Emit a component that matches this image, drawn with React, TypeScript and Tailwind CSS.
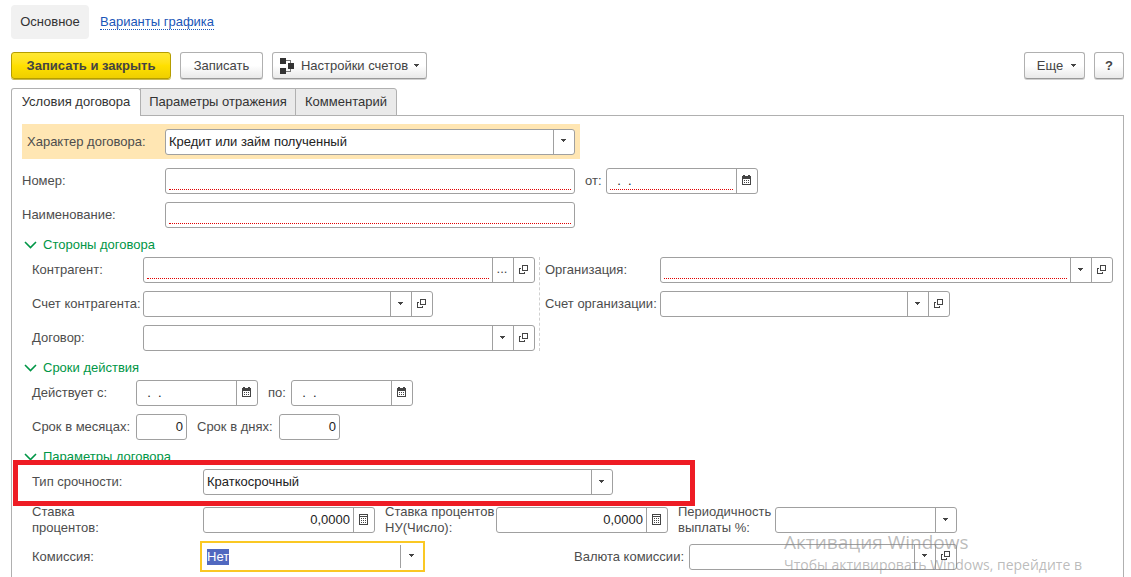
import { useEffect, useRef } from "react";
import type { ReactNode } from "react";
import clsx from "clsx";

const Caret = () => (
  <svg width="5" height="3" viewBox="0 0 5 3" fill="currentColor" shapeRendering="crispEdges">
    <path d="M0 0h5v1H4v1H3v1H2V2H1V1H0z" />
  </svg>
);

const OpenIcon = () => (
  <svg width="9" height="9" viewBox="0 0 9 9" fill="none" stroke="currentColor" shapeRendering="crispEdges">
    <path d="M3.5 0.5h5v5h-5z M2 3.5H0.5v5h5V7" />
  </svg>
);

const CalendarIcon = () => (
  <svg width="9" height="10" viewBox="0 0 9 10" fill="currentColor" shapeRendering="crispEdges">
    <path d="M0 1h1V0h2v1h3V0h2v1h1v9H0z M1 4v5h7V4z" fillRule="evenodd" />
    <path d="M2 5h1v1H2z M4 5h1v1H4z M6 5h1v1H6z M2 7h1v1H2z M4 7h1v1H4z M6 7h1v1H6z" />
  </svg>
);

const CalculatorIcon = () => (
  <svg width="9" height="11" viewBox="0 0 9 11" fill="currentColor" shapeRendering="crispEdges">
    <path d="M0 0h9v11H0z M1 1v1h7V1z M1 3v7h7V3z" fillRule="evenodd" />
    <path d="M2 4h1v1H2z M4 4h1v1H4z M6 4h1v1H6z M2 6h1v1H2z M4 6h1v1H4z M6 6h1v1H6z M2 8h1v1H2z M4 8h1v1H4z M6 8h1v1H6z" />
  </svg>
);

const SchemeIcon = () => (
  <svg width="15" height="16" viewBox="0 0 15 16" fill="#333" shapeRendering="crispEdges">
    <path d="M0 0h6v6H0z M0 10h6v6H0z M8 5h6v6H8z" />
    <path d="M6 2.5h4.5V5 M6 13.5h4.5V11" fill="none" stroke="#777" />
  </svg>
);

// Frame shared by every text box and drop-down
const Box = ({ className, children }: { className: string; children: ReactNode }) => (
  <div className={clsx("flex h-[26px] rounded-[3px] border border-[#a0a0a0] bg-white", className)}>{children}</div>
);

const BoxButton = ({ label, children }: { label: string; children: ReactNode }) => (
  <button
    type="button"
    aria-label={label}
    className="flex w-[21px] shrink-0 items-center justify-center border-l border-[#a0a0a0] pr-[2px] pb-[2px] text-[#444]"
  >
    {children}
  </button>
);

const OpenButton = () => (
  <BoxButton label="Открыть">
    <OpenIcon />
  </BoxButton>
);

type TextProps = { id: string; value?: string; required?: boolean; right?: boolean };

const Text = ({ id, value = "", required, right }: TextProps) => (
  <input
    id={id}
    type="text"
    defaultValue={value}
    className={clsx(
      "mx-[3px] mb-[3px] min-w-0 flex-1 border-b pt-[3px] text-[#222] outline-none",
      required ? "border-dotted border-[#e00000]" : "border-transparent",
      right && "text-right"
    )}
  />
);

const Select = ({ id, value = "" }: { id: string; value?: string }) => (
  <div className="relative min-w-0 flex-1">
    <select id={id} defaultValue={value} className="h-full w-full appearance-none pr-6 pl-[3px] text-[#222] outline-none">
      <option>{value}</option>
    </select>
    <span className="pointer-events-none absolute inset-y-0 right-0 flex w-[21px] items-center justify-center border-l border-[#a0a0a0] pr-[2px] pb-[2px] text-[#444]">
      <Caret />
    </span>
  </div>
);

const DateBox = ({ id, className, required }: { id: string; className: string; required?: boolean }) => (
  <Box className={className}>
    <Text id={id} value="  .  ." required={required} />
    <BoxButton label="Выбрать дату">
      <CalendarIcon />
    </BoxButton>
  </Box>
);

const NumberBox = ({ id }: { id: string }) => (
  <Box className="w-[172px]">
    <Text id={id} value="0,0000" right />
    <BoxButton label="Калькулятор">
      <CalculatorIcon />
    </BoxButton>
  </Box>
);

const Label = ({ id, className, children }: { id: string; className?: string; children: ReactNode }) => (
  <label htmlFor={id} className={clsx("shrink-0 leading-4 whitespace-nowrap", className)}>
    {children}
  </label>
);

const Section = ({ title, children }: { title: string; children: ReactNode }) => (
  <section>
    <h2 className="flex h-[29px] items-center gap-[6px] pt-1 pl-[2px] text-[#009646]">
      <svg width="13" height="8" viewBox="0 0 13 8" fill="none" stroke="currentColor" strokeWidth="1.6">
        <path d="M1 1l5.5 5.5L12 1" />
      </svg>
      {title}
    </h2>
    <div className="pl-[10px]">{children}</div>
  </section>
);

const toolButton =
  "flex h-[27px] items-center justify-center rounded-[3px] border border-[#b0b0b0] border-b-[#989898] bg-linear-to-b from-white from-50% to-[#e9e9e9] text-[#444] shadow-[0_1px_0_#d0d0d0]";

const Toolbar = () => (
  <div className="mt-[13px] flex justify-between">
    <div className="flex gap-[9px]">
      <button
        type="button"
        className="flex h-[27px] w-[160px] items-center justify-center rounded-[3px] border border-[#b59d00] bg-linear-to-b from-[#ffe833] via-[#ffe000] to-[#efcf00] font-bold text-[#444] shadow-[0_1px_0_#c8b850]"
      >
        Записать и закрыть
      </button>
      <button type="button" className={clsx(toolButton, "w-[83px]")}>
        Записать
      </button>
      <button type="button" className={clsx(toolButton, "w-[155px] gap-[6px]")}>
        <SchemeIcon />
        Настройки счетов
        <Caret />
      </button>
    </div>
    <div className="flex gap-[9px]">
      <button type="button" className={clsx(toolButton, "w-[61px] gap-2 pl-1")}>
        Еще
        <Caret />
      </button>
      <button type="button" className={clsx(toolButton, "w-[30px] font-bold")}>
        ?
      </button>
    </div>
  </div>
);

const Tabs = () => (
  <div role="tablist" className="relative z-10 -mb-px flex pt-[9px] text-[#333]">
    <button role="tab" aria-selected="true" className="h-[28px] w-[130px] rounded-t-[3px] border border-b-0 border-[#b0b0b0] bg-white pb-px">
      Условия договора
    </button>
    <button role="tab" className="-ml-px h-[28px] w-[156px] border border-[#b0b0b0] bg-[#eaeaea]">
      Параметры отражения
    </button>
    <button role="tab" className="-ml-px h-[28px] w-[102px] rounded-tr-[3px] border border-[#b0b0b0] bg-[#eaeaea]">
      Комментарий
    </button>
  </div>
);

const App = () => {
  const commission = useRef<HTMLInputElement>(null);

  // The commission box opens focused, with its value selected
  useEffect(() => {
    commission.current?.focus();
    commission.current?.select();
  }, []);

  return (
    <div className="relative flex min-h-screen flex-col overflow-hidden bg-white pt-[5px] pr-[7px] pl-[11px] font-['Liberation_Sans',Arial,sans-serif] text-[13px] text-[#4d4d4d]">
      <nav className="flex items-center gap-[11px]">
        <a href="#main" className="flex h-[34px] w-[78px] items-center justify-center rounded-[4px] bg-[#f1f1f1] text-[#333]">
          Основное
        </a>
        <a href="#schedule" className="border-b border-dotted border-[#1a56b8] leading-[14px] text-[#1a56b8]">
          Варианты графика
        </a>
      </nav>
      <Toolbar />
      <Tabs />

      <main className="flex-1 border border-b-0 border-[#b0b0b0] px-[10px] pt-2">
        <div className="flex h-[35px] w-[558px] items-center bg-[#ffe6b3] pl-[5px]">
          <Label id="kind" className="w-[138px]">Характер договора:</Label>
          <Box className="w-[410px]">
            <Select id="kind" value="Кредит или займ полученный" />
          </Box>
        </div>
        <div className="mt-[9px] flex items-center">
          <Label id="number" className="w-[143px]">Номер:</Label>
          <Box className="w-[410px]">
            <Text id="number" required />
          </Box>
          <Label id="date" className="ml-[10px] w-[21px]">от:</Label>
          <DateBox id="date" className="w-[152px]" required />
        </div>
        <div className="mt-2 flex items-center">
          <Label id="name" className="w-[143px]">Наименование:</Label>
          <Box className="w-[410px]">
            <Text id="name" required />
          </Box>
        </div>

        <Section title="Стороны договора">
          <div className="flex">
            <div className="flex w-[508px] shrink-0 flex-col gap-2 border-r border-dashed border-[#d0d0d0]">
              <div className="flex items-center">
                <Label id="partner" className="w-[111px]">Контрагент:</Label>
                <Box className="w-[392px]">
                  <Text id="partner" required />
                  <BoxButton label="Выбрать">...</BoxButton>
                  <OpenButton />
                </Box>
              </div>
              <div className="flex items-center">
                <Label id="partner-account" className="w-[111px]">Счет контрагента:</Label>
                <Box className="w-[290px]">
                  <Select id="partner-account" />
                  <OpenButton />
                </Box>
              </div>
              <div className="flex items-center">
                <Label id="contract" className="w-[111px]">Договор:</Label>
                <Box className="w-[392px]">
                  <Select id="contract" />
                  <OpenButton />
                </Box>
              </div>
            </div>
            <div className="flex min-w-0 flex-1 flex-col gap-2 pl-[5px]">
              <div className="flex items-center">
                <Label id="company" className="w-[115px]">Организация:</Label>
                <Box className="min-w-0 flex-1">
                  <Text id="company" required />
                  <BoxButton label="Выбрать">
                    <Caret />
                  </BoxButton>
                  <OpenButton />
                </Box>
              </div>
              <div className="flex items-center">
                <Label id="company-account" className="w-[115px]">Счет организации:</Label>
                <Box className="w-[290px]">
                  <Select id="company-account" />
                  <OpenButton />
                </Box>
              </div>
            </div>
          </div>
        </Section>

        <Section title="Сроки действия">
          <div className="flex items-center">
            <Label id="from" className="w-[104px]">Действует с:</Label>
            <DateBox id="from" className="w-[122px]" />
            <Label id="to" className="ml-[10px] w-[23px]">по:</Label>
            <DateBox id="to" className="w-[122px]" />
          </div>
          <div className="mt-2 flex items-center">
            <Label id="months" className="w-[104px]">Срок в месяцах:</Label>
            <Box className="w-[51px]">
              <Text id="months" value="0" right />
            </Box>
            <Label id="days" className="ml-[10px] w-[82px]">Срок в днях:</Label>
            <Box className="w-[61px]">
              <Text id="days" value="0" right />
            </Box>
          </div>
        </Section>

        <Section title="Параметры договора">
          <div className="relative flex items-center">
            <Label id="term" className="w-[171px]">Тип срочности:</Label>
            <Box className="w-[410px]">
              <Select id="term" value="Краткосрочный" />
            </Box>
            {/* red marker around the row */}
            <div className="pointer-events-none absolute -top-[9px] -bottom-[11px] -left-[19px] z-10 w-[682px] border-5 border-[#ee1c24]" />
          </div>
          <div className="mt-[9px] flex items-center">
            <Label id="rate" className="w-[171px]">Ставка<br />процентов:</Label>
            <NumberBox id="rate" />
            <Label id="rate-tax" className="ml-[10px] w-[111px]">Ставка процентов<br />НУ(Число):</Label>
            <NumberBox id="rate-tax" />
            <Label id="period" className="ml-[10px] w-[97px]">Периодичность<br />выплаты %:</Label>
            <Box className="w-[182px]">
              <Select id="period" />
            </Box>
          </div>
          <div className="mt-[5px] flex w-[925px] items-center">
            <Label id="commission" className="w-[168px]">Комиссия:</Label>
            <div className="flex h-[31px] w-[225px] border-2 border-[#fac824] bg-white py-[2px]">
              <input
                id="commission"
                ref={commission}
                type="text"
                defaultValue="Нет"
                className="min-w-0 flex-1 pl-[5px] leading-4 text-[#222] outline-none selection:bg-[#5068c0] selection:text-white"
              />
              <button type="button" aria-label="Выбрать" className="flex w-[23px] items-center justify-center border-l border-[#a0a0a0] pr-[2px] pb-[2px] text-[#444]">
                <Caret />
              </button>
            </div>
            <Label id="currency" className="ml-auto w-[115px]">Валюта комиссии:</Label>
            <Box className="w-[268px]">
              <Select id="currency" />
              <OpenButton />
            </Box>
          </div>
        </Section>
      </main>

      <div className="pointer-events-none absolute right-[45px] bottom-px z-20 w-[302px] font-['Open_Sans','Noto_Sans',sans-serif] whitespace-nowrap text-[#828282]/55">
        <p className="text-[19px] leading-6">Активация Windows</p>
        <p className="text-[14px] leading-[22px]">Чтобы активировать Windows, перейдите в</p>
      </div>
    </div>
  );
};

export default App;
